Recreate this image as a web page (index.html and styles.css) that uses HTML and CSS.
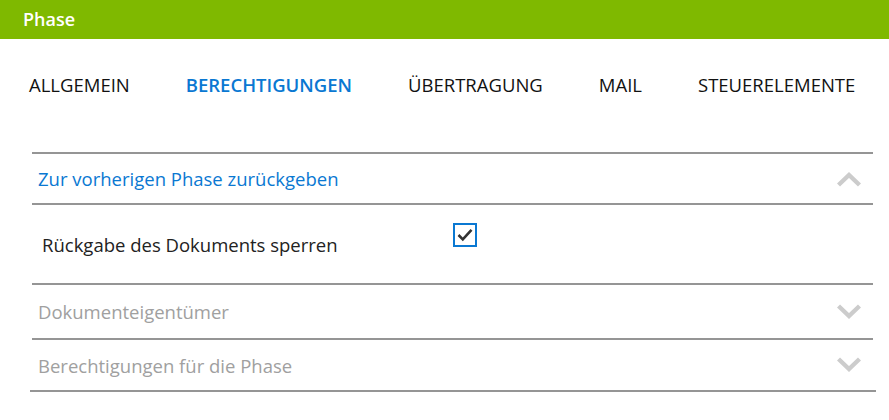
FILE: index.html
```html
<!DOCTYPE html>
<html lang="de">
<head>
<meta charset="utf-8">
<link rel="stylesheet" href="styles.css">
</head>
<body>
<header class="topbar">Phase</header>
<nav class="tabs">
  <span class="tab">ALLGEMEIN</span>
  <span class="tab active">BERECHTIGUNGEN</span>
  <span class="tab">ÜBERTRAGUNG</span>
  <span class="tab">MAIL</span>
  <span class="tab">STEUERELEMENTE</span>
</nav>
<div class="accordion">
  <section class="acc-item open">
    <div class="acc-head">
      <span class="acc-title">Zur vorherigen Phase zurückgeben</span>
      <svg class="chev" width="24" height="16" viewBox="0 0 24 16"><path d="M1.5 14 L12 4 L22.5 14" fill="none" stroke="#cccccc" stroke-width="4.4"/></svg>
    </div>
    <div class="acc-body">
      <span class="field-label">Rückgabe des Dokuments sperren</span>
      <span class="checkbox"><svg width="16" height="14" viewBox="0 0 16 14"><path d="M1.5 7 L5.8 11.3 L14.5 1.8" fill="none" stroke="#333333" stroke-width="2.6"/></svg></span>
    </div>
  </section>
  <section class="acc-item">
    <div class="acc-head tall">
      <span class="acc-title muted">Dokumenteigentümer</span>
      <svg class="chev" width="24" height="16" viewBox="0 0 24 16"><path d="M1.5 2 L12 12 L22.5 2" fill="none" stroke="#cccccc" stroke-width="4.4"/></svg>
    </div>
  </section>
  <section class="acc-item last">
    <div class="acc-head">
      <span class="acc-title muted">Berechtigungen für die Phase</span>
      <svg class="chev" width="24" height="16" viewBox="0 0 24 16"><path d="M1.5 2 L12 12 L22.5 2" fill="none" stroke="#cccccc" stroke-width="4.4"/></svg>
    </div>
  </section>
</div>
</body>
</html>
```
FILE: styles.css
```css
html, body {
  margin: 0;
  padding: 0;
  background: #ffffff;
  font-family: "Open Sans", "Noto Sans", sans-serif;
}
.topbar {
  height: 39px;
  background: #7fb900;
  color: #ffffff;
  font-size: 18px;
  font-weight: 600;
  line-height: 38px;
  padding-left: 23px;
}
.tabs {
  display: flex;
  gap: 56px;
  padding: 34px 0 0 29px;
  margin-bottom: 55px;
}
.tab {
  font-size: 18.5px;
  color: #111111;
  line-height: 24px;
  white-space: nowrap;
}
.tab.active {
  color: #0a78d2;
  font-weight: 600;
}
.accordion {
  margin: 0 16px 0 32px;
}
.acc-item {
  border-top: 2px solid #959595;
}
.acc-item.last::after {
  content: "";
  display: block;
  height: 2px;
  background: #959595;
  margin: 0 -3px 0 -2px;
}
.acc-head {
  display: flex;
  align-items: center;
  justify-content: space-between;
  height: 49px;
  padding: 0 12px 0 6px;
}
.acc-head.tall {
  height: 53px;
}
.acc-item.last .acc-head {
  height: 50px;
}
.acc-title {
  font-size: 18.5px;
  color: #0a78d2;
}
.acc-title.muted {
  color: #a0a0a0;
}
.chev {
  display: block;
}
.acc-body {
  display: flex;
  align-items: flex-start;
  height: 78px;
  border-top: 2px solid #959595;
  padding-left: 10px;
}
.field-label {
  font-size: 18.5px;
  color: #222222;
  width: 411px;
  line-height: 24px;
  margin-top: 28px;
}
.checkbox {
  width: 20px;
  height: 20px;
  border: 2px solid #0a78d2;
  display: flex;
  align-items: center;
  justify-content: center;
  margin-top: 18px;
}
```
